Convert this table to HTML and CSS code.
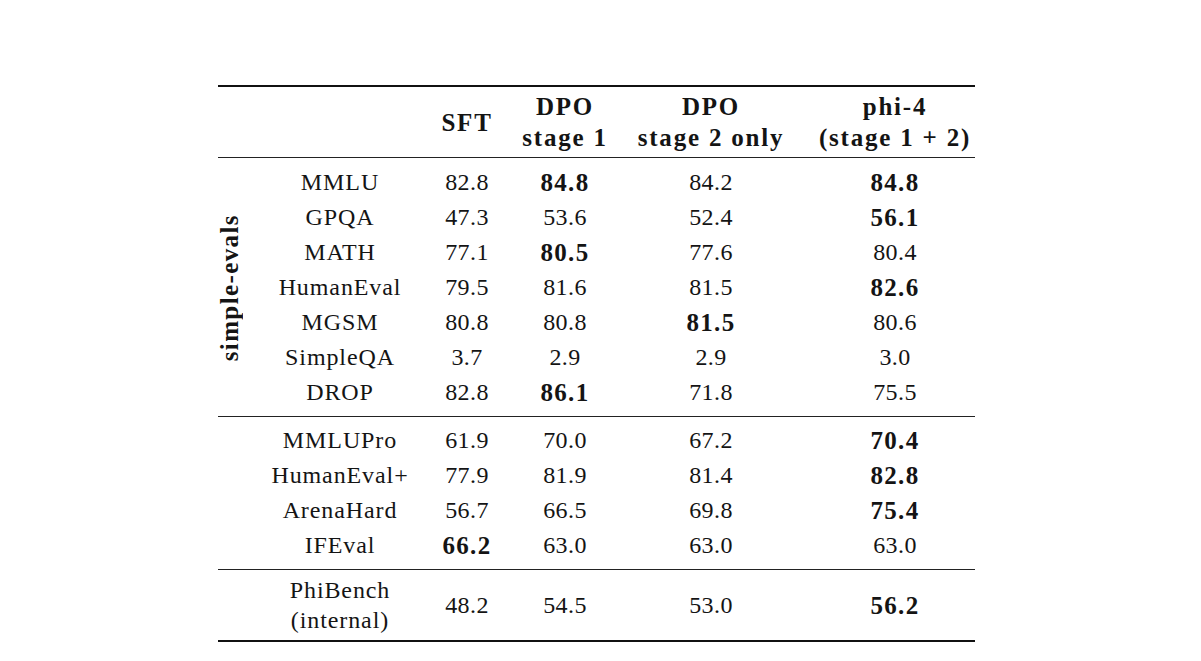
FILE: index.html
```html
<!DOCTYPE html>
<html>
<head>
<meta charset="utf-8">
<link rel="stylesheet" href="styles.css">
</head>
<body>
<div class="page">
  <div class="tbl">
    <div class="sec head">
      <div class="c c0"></div>
      <div class="c c1"></div>
      <div class="c c2 hd">SFT</div>
      <div class="c c3 hd">DPO<br>stage 1</div>
      <div class="c c4 hd">DPO<br>stage 2 only</div>
      <div class="c c5 hd">phi-4<br>(stage 1 + 2)</div>
    </div>
    <div class="sec s1">
      <div class="c c0 rot"><span>simple-evals</span></div>
      <div class="c c1">MMLU</div><div class="c c2">82.8</div><div class="c c3 b">84.8</div><div class="c c4">84.2</div><div class="c c5 b">84.8</div>
      <div class="c c1">GPQA</div><div class="c c2">47.3</div><div class="c c3">53.6</div><div class="c c4">52.4</div><div class="c c5 b">56.1</div>
      <div class="c c1">MATH</div><div class="c c2">77.1</div><div class="c c3 b">80.5</div><div class="c c4">77.6</div><div class="c c5">80.4</div>
      <div class="c c1">HumanEval</div><div class="c c2">79.5</div><div class="c c3">81.6</div><div class="c c4">81.5</div><div class="c c5 b">82.6</div>
      <div class="c c1">MGSM</div><div class="c c2">80.8</div><div class="c c3">80.8</div><div class="c c4 b">81.5</div><div class="c c5">80.6</div>
      <div class="c c1">SimpleQA</div><div class="c c2">3.7</div><div class="c c3">2.9</div><div class="c c4">2.9</div><div class="c c5">3.0</div>
      <div class="c c1">DROP</div><div class="c c2">82.8</div><div class="c c3 b">86.1</div><div class="c c4">71.8</div><div class="c c5">75.5</div>
    </div>
    <div class="sec s2">
      <div class="c c0"></div><div class="c c1">MMLUPro</div><div class="c c2">61.9</div><div class="c c3">70.0</div><div class="c c4">67.2</div><div class="c c5 b">70.4</div>
      <div class="c c0"></div><div class="c c1">HumanEval+</div><div class="c c2">77.9</div><div class="c c3">81.9</div><div class="c c4">81.4</div><div class="c c5 b">82.8</div>
      <div class="c c0"></div><div class="c c1">ArenaHard</div><div class="c c2">56.7</div><div class="c c3">66.5</div><div class="c c4">69.8</div><div class="c c5 b">75.4</div>
      <div class="c c0"></div><div class="c c1">IFEval</div><div class="c c2 b">66.2</div><div class="c c3">63.0</div><div class="c c4">63.0</div><div class="c c5">63.0</div>
    </div>
    <div class="sec s3">
      <div class="c c0"></div>
      <div class="c c1 two">PhiBench<br>(internal)</div>
      <div class="c c2">48.2</div><div class="c c3">54.5</div><div class="c c4">53.0</div><div class="c c5 b">56.2</div>
    </div>
  </div>
</div>
</body>
</html>
```

FILE: styles.css
```css
html, body {
  margin: 0;
  padding: 0;
  background: #ffffff;
}

.page {
  padding: 85px 0 0 218px;
  font-family: "Liberation Serif", "Times New Roman", serif;
  font-size: 24px;
  color: #141414;
}

.tbl {
  width: 757px;
  border-top: 2px solid #111;
  border-bottom: 2px solid #111;
  display: flex;
  flex-direction: column;
}

.sec {
  display: grid;
  grid-template-columns: 24px 192px 66px 130px 162px 183px;
  grid-auto-rows: 35px;
  border-bottom: 1px solid #222;
}

.sec.s3 {
  border-bottom: none;
}

.head {
  grid-auto-rows: 70px;
}

.s1 {
  padding: 7px 0 6px;
}

.s2 {
  padding: 6px 0 6px;
}

.s3 {
  grid-auto-rows: 70px;
}

.c {
  display: flex;
  align-items: center;
  justify-content: center;
  text-align: center;
  line-height: 35px;
  letter-spacing: 0.4px;
  white-space: nowrap;
}

.c1 {
  padding-left: 4px;
  letter-spacing: 0.9px;
}

.c5 {
  padding-left: 23px;
}

.hd {
  font-weight: bold;
  font-size: 25px;
  line-height: 31px;
  letter-spacing: 1.8px;
}

.two {
  line-height: 30px;
}

.b {
  font-weight: bold;
  font-size: 25px;
  letter-spacing: 1.3px;
}

.rot {
  grid-row: 1 / span 7;
  grid-column: 1;
}

.rot span {
  writing-mode: vertical-rl;
  transform: rotate(180deg);
  font-weight: bold;
  font-size: 25px;
  letter-spacing: 1.4px;
  line-height: 24px;
}

.s1 .c1 {
  grid-column: 2;
}
```
